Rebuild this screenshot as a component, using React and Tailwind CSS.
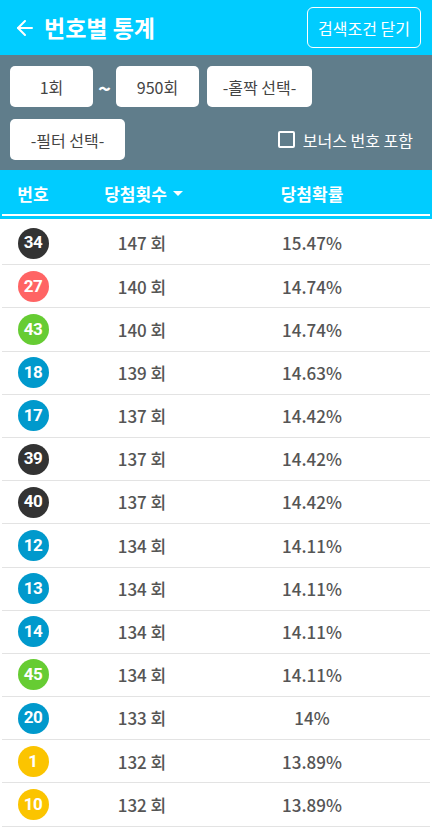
import { ArrowLeft } from 'lucide-react';

const rows = [
  { no: 34, count: 147, rate: '15.47%' },
  { no: 27, count: 140, rate: '14.74%' },
  { no: 43, count: 140, rate: '14.74%' },
  { no: 18, count: 139, rate: '14.63%' },
  { no: 17, count: 137, rate: '14.42%' },
  { no: 39, count: 137, rate: '14.42%' },
  { no: 40, count: 137, rate: '14.42%' },
  { no: 12, count: 134, rate: '14.11%' },
  { no: 13, count: 134, rate: '14.11%' },
  { no: 14, count: 134, rate: '14.11%' },
  { no: 45, count: 134, rate: '14.11%' },
  { no: 20, count: 133, rate: '14%' },
  { no: 1, count: 132, rate: '13.89%' },
  { no: 10, count: 132, rate: '13.89%' },
];

// lotto ball colour by range
const ballColor = (n) => {
  if (n <= 10) return 'bg-[#fbc400]';
  if (n <= 20) return 'bg-[#0099cc]';
  if (n <= 30) return 'bg-[#ff6464]';
  if (n <= 40) return 'bg-[#333333]';
  return 'bg-[#66cc33]';
};

const font = 'font-["Noto_Sans_CJK_KR","Noto_Sans",sans-serif]';

const Box = ({ children, className = '' }) => (
  <div
    className={`h-[41px] bg-white rounded-[5px] flex items-center justify-center text-[16px] text-[#444] ${className}`}
  >
    {children}
  </div>
);

export default function App() {
  return (
    <div className={`w-[432px] h-[830px] bg-white overflow-hidden ${font}`}>
      {/* Top bar */}
      <div className="h-[55px] bg-[#00ccff] flex items-center justify-between pl-[13px] pr-[11px]">
        <div className="flex items-center gap-[7px] text-white">
          <ArrowLeft size={24} strokeWidth={2} />
          <span className="text-[23px] font-bold leading-none">번호별 통계</span>
        </div>
        <button
          type="button"
          className="h-[41px] w-[114px] border-[1.5px] border-white rounded-[6px] text-white text-[16px]"
        >
          검색조건 닫기
        </button>
      </div>

      {/* Filter panel */}
      <div className="h-[115px] bg-[#607d8b] px-[10px] pt-[11px] flex flex-col gap-[12px]">
        <div className="flex items-center">
          <Box className="w-[83px]">1회</Box>
          <span className="w-[23px] text-center text-white text-[22px] font-bold leading-none">~</span>
          <Box className="w-[83px]">950회</Box>
          <Box className="w-[105px] ml-[8px]">-홀짝 선택-</Box>
        </div>
        <div className="flex items-center justify-between pr-[9px]">
          <Box className="w-[115px]">-필터 선택-</Box>
          <label className="flex items-center gap-[8px] text-white text-[16px]">
            <span className="w-[17px] h-[17px] border-2 border-white rounded-[2px]" />
            보너스 번호 포함
          </label>
        </div>
      </div>

      {/* Table header */}
      <div className="h-[49px] bg-[#00ccff] px-[2px] flex flex-col">
        <div className="flex-1 grid grid-cols-[62px_156px_184px] items-center text-white text-[17px] font-bold pt-[3px]">
          <span className="text-center">번호</span>
          <span className="flex items-center justify-center gap-[6px] pl-[3px]">
            당첨횟수
            <svg width="10" height="6" viewBox="0 0 10 6">
              <path d="M0 0h10L5 5z" fill="white" />
            </svg>
          </span>
          <span className="text-center">당첨확률</span>
        </div>
        <div className="h-[2px] bg-white mb-[3px]" />
      </div>

      {/* Rows */}
      <div className="px-[2px] pt-[3px]">
        {rows.map((r, i) => (
          <div
            key={i}
            className="h-[43.2px] grid grid-cols-[62px_156px_184px] items-center border-b border-[#e3e3e3] text-[17px] font-medium text-[#555]"
          >
            <div className="flex justify-center">
              <span
                className={`w-[31px] h-[31px] rounded-full ${ballColor(r.no)} flex items-center justify-center text-white text-[17px] font-bold font-["Roboto",sans-serif] tracking-tight`}
              >
                {r.no}
              </span>
            </div>
            <span className="text-center">{r.count} 회</span>
            <span className="text-center">{r.rate}</span>
          </div>
        ))}
      </div>
    </div>
  );
}
